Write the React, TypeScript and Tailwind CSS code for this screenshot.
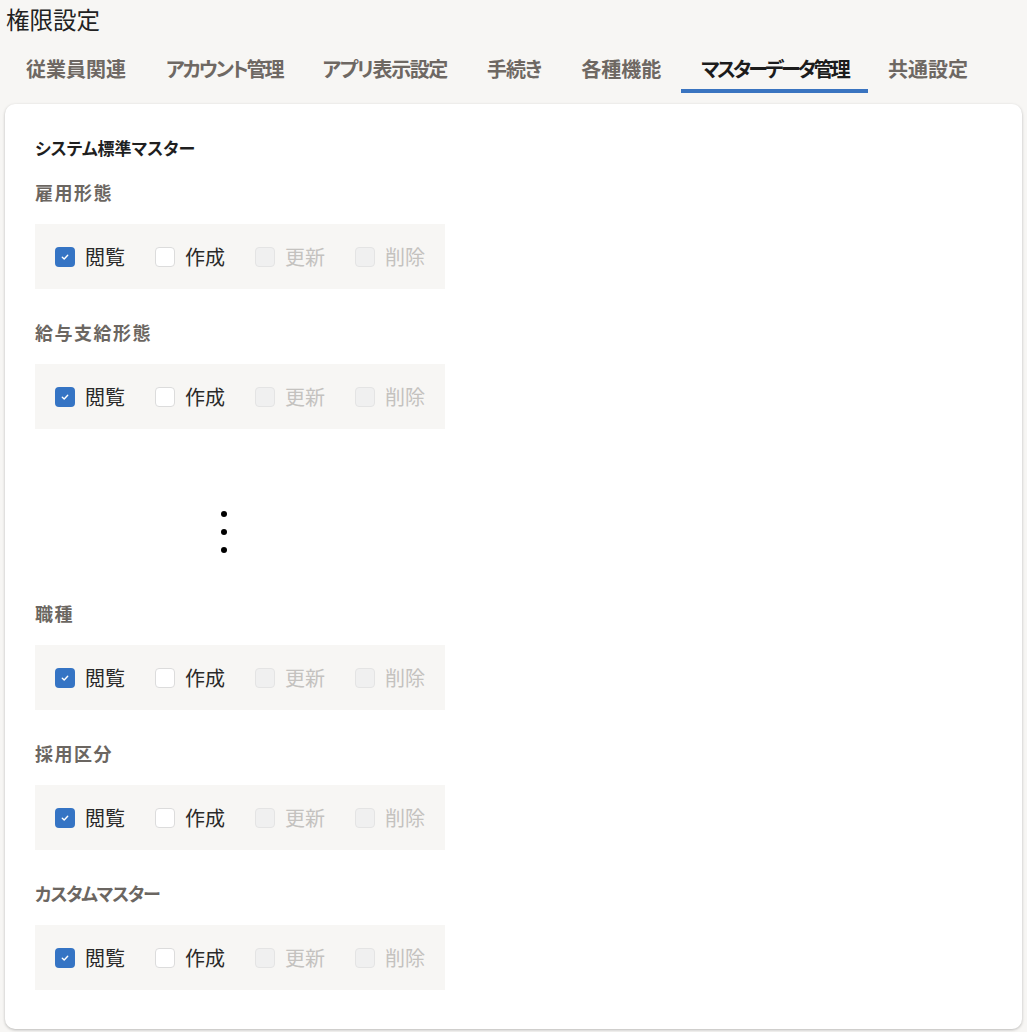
import React from "react";

const tabs = [
  { label: "従業員関連", track: "tracking-normal" },
  { label: "アカウント管理", track: "tracking-[-2.1px]" },
  { label: "アプリ表示設定", track: "tracking-[-1.4px]" },
  { label: "手続き", track: "tracking-[-1px]" },
  { label: "各種機能", track: "tracking-normal" },
  { label: "マスターデータ管理", track: "tracking-[-2.75px]" },
  { label: "共通設定", track: "tracking-normal" },
];

const font = "font-['Noto_Sans_CJK_JP','Noto_Sans',sans-serif] [font-feature-settings:'palt']";

type State = "checked" | "empty" | "disabled";

function Box({ state }: { state: State }) {
  if (state === "checked") {
    return (
      <span className="w-5 h-5 shrink-0 rounded-[4px] bg-[#3574c4] flex items-center justify-center">
        <svg width="10" height="10" viewBox="0 0 10 10" fill="none">
          <path d="M2.3 5.2 L4.2 7 L7.7 3.3" stroke="white" strokeWidth="1.4" strokeLinecap="round" strokeLinejoin="round" />
        </svg>
      </span>
    );
  }
  if (state === "empty") {
    return <span className="w-5 h-5 shrink-0 rounded-[4px] bg-white border border-[#dcdcdc]" />;
  }
  return <span className="w-5 h-5 shrink-0 rounded-[4px] bg-[#f0f0f0] border border-[#e4e4e4]" />;
}

function PermissionRow() {
  const items: { label: string; state: State }[] = [
    { label: "閲覧", state: "checked" },
    { label: "作成", state: "empty" },
    { label: "更新", state: "disabled" },
    { label: "削除", state: "disabled" },
  ];
  return (
    <div className="w-[410px] h-[65px] bg-[#f7f6f4] flex items-center pl-5">
      {items.map((item) => (
        <div key={item.label} className="w-[100px] shrink-0 flex items-center gap-[10px]">
          <Box state={item.state} />
          <span
            className={
              "text-[20px] leading-6 " +
              (item.state === "disabled" ? "text-[#c4c2bf]" : "text-[#2a2a2a]")
            }
          >
            {item.label}
          </span>
        </div>
      ))}
    </div>
  );
}

function Group({ label, track }: { label: string; track: string }) {
  return (
    <div>
      <div className={"text-[18px] leading-6 font-bold text-[#6b6661] mb-5 " + track}>{label}</div>
      <PermissionRow />
    </div>
  );
}

export default function App() {
  return (
    <div className={"bg-[#f7f6f4] min-h-screen pb-1 " + font}>
      {/* TITLE */}
      <h1 className="px-[6px] pt-[5px] text-[23.5px] leading-[28px] text-[#222]">権限設定</h1>

      {/* TABS */}
      <div className="flex px-[6px] mt-[24px]">
        {tabs.map((tab) => {
          const active = tab.label === "マスターデータ管理";
          return (
            <div
              key={tab.label}
              className={
                "px-5 h-[36px] text-[20px] leading-6 font-bold border-b-4 " +
                tab.track +
                " " +
                (active ? "text-[#1c1c1c] border-[#3a74c0]" : "text-[#6e6863] border-transparent")
              }
            >
              {tab.label}
            </div>
          );
        })}
      </div>

      {/* CARD */}
      <div className="mx-[5px] mt-[11px] bg-white rounded-[10px] shadow-[0_1px_3px_rgba(0,0,0,0.25)] pt-8 pb-[39px] px-[30px]">
        <h2 className="text-[17px] leading-6 font-bold text-[#1f1f1f]">システム標準マスター</h2>

        <div className="mt-5 flex flex-col gap-[31px]">
          <Group label="雇用形態" track="tracking-[1.5px]" />
          <Group label="給与支給形態" track="tracking-[1.5px]" />
        </div>

        {/* DOTS */}
        <div className="ml-[186px] pt-[82px] pb-[48px] flex flex-col gap-[12px]">
          <span className="w-[6px] h-[6px] rounded-full bg-black" />
          <span className="w-[6px] h-[6px] rounded-full bg-black" />
          <span className="w-[6px] h-[6px] rounded-full bg-black" />
        </div>

        <div className="flex flex-col gap-[31px]">
          <Group label="職種" track="tracking-[1.5px]" />
          <Group label="採用区分" track="tracking-[1.5px]" />
          <Group label="カスタムマスター" track="tracking-[-1.2px]" />
        </div>
      </div>
    </div>
  );
}
